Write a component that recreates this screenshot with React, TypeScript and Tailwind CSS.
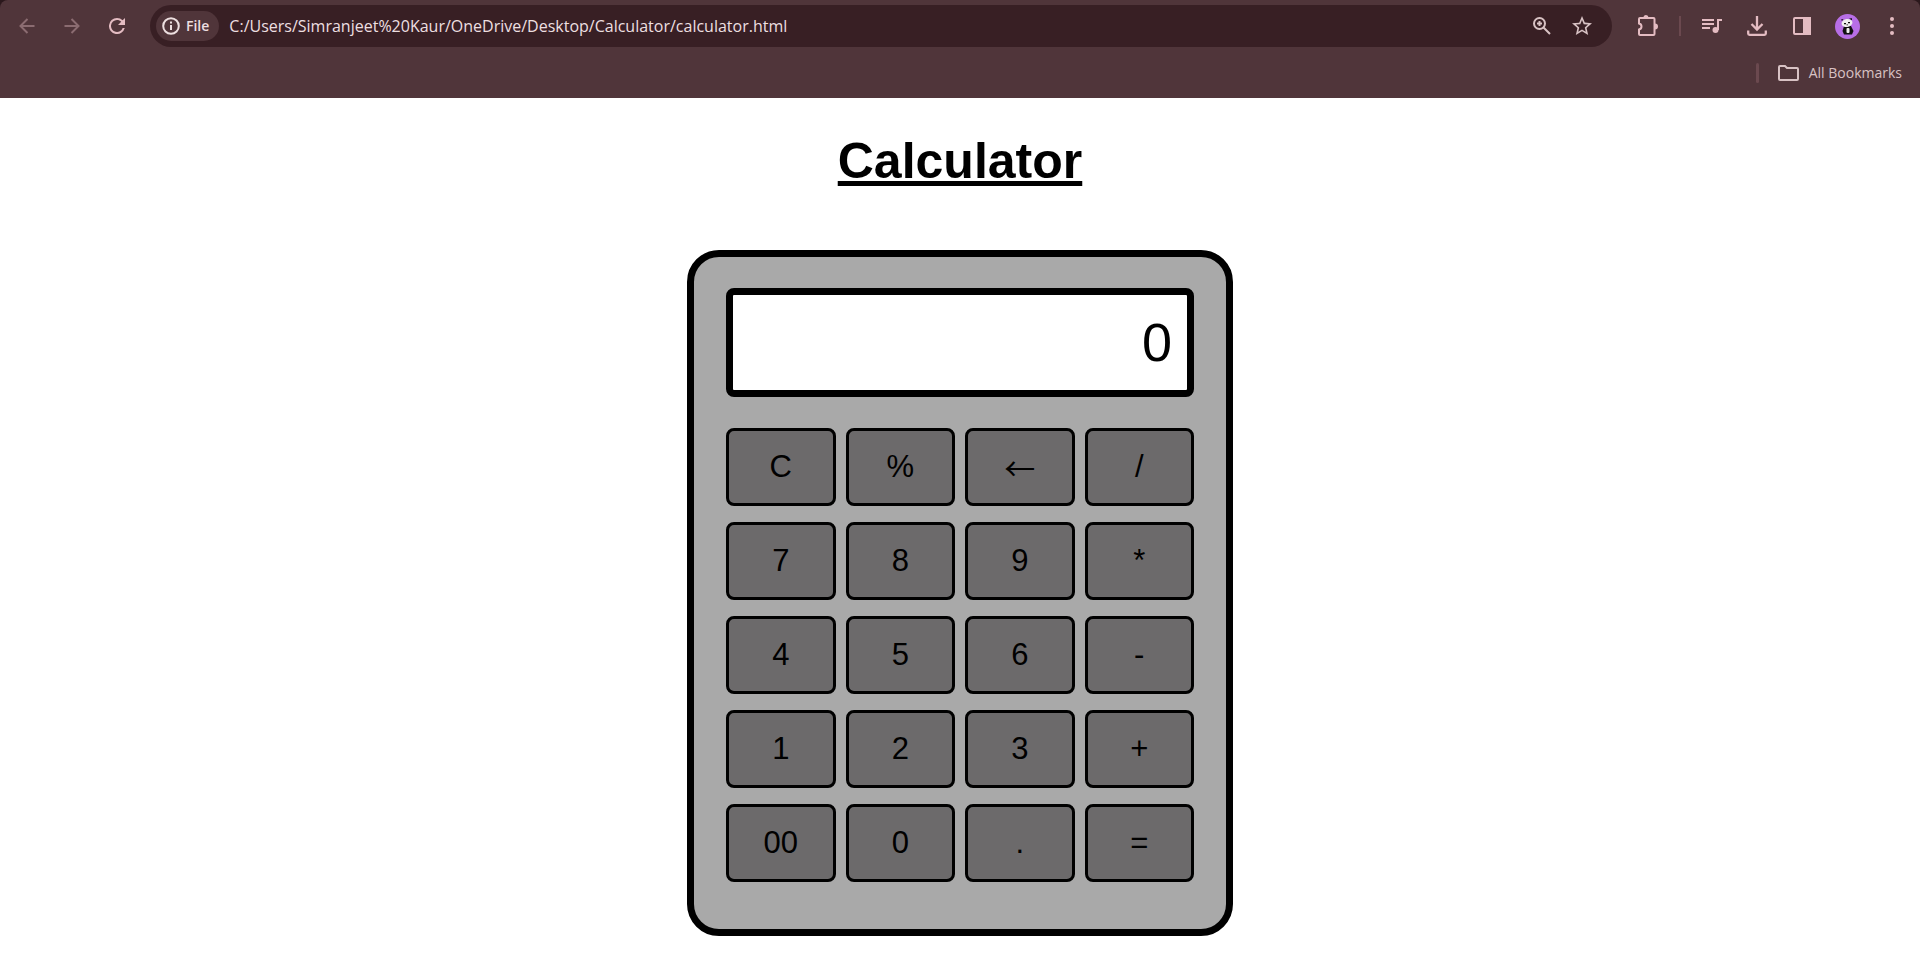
import type { ReactNode } from "react";

type IconProps = { w: number; h: number; children: ReactNode; viewBox?: string };

function Icon({ w, h, children, viewBox }: IconProps) {
  return (
    <svg width={w} height={h} viewBox={viewBox ?? `0 0 ${w} ${h}`} fill="none" stroke="currentColor" strokeWidth="2" aria-hidden="true">
      {children}
    </svg>
  );
}

function ToolButton({ label, children, className = "" }: { label: string; children: ReactNode; className?: string }) {
  return (
    <button type="button" aria-label={label} className={`flex size-8 shrink-0 items-center justify-center ${className}`}>
      {children}
    </button>
  );
}

function BrowserBar() {
  return (
    <div className="bg-[#2b181c]">
      <header className="flex h-[98px] flex-col rounded-t-lg bg-[#50353a] pt-[5px] font-['Open_Sans','Noto_Sans',sans-serif] text-[#e4bcc2]">
        <div className="flex h-[42px] items-center pr-3 pl-[11px]">
          <nav aria-label="Navigation" className="flex gap-[13px] pr-[17px]">
            <ToolButton label="Back" className="text-[#8b6c71]">
              <Icon w={16} h={16}><path d="M15.500 8H2M8.500 1L1.500 8l7 7" /></Icon>
            </ToolButton>
            <ToolButton label="Forward" className="text-[#8b6c71]">
              <Icon w={16} h={16}><path d="M.5 8H14M7.500 1l7 7-7 7" /></Icon>
            </ToolButton>
            <ToolButton label="Reload">
              <Icon w={16} h={16} viewBox="4 4 16 16">
                <path
                  fill="currentColor"
                  stroke="none"
                  d="M17.650 6.350A7.960 7.960 0 0 0 12 4a8 8 0 1 0 7.730 10h-2.080A6 6 0 1 1 12 6c1.660 0 3.140.690 4.220 1.780L13 11h7V4z"
                />
              </Icon>
            </ToolButton>
          </nav>
          <div className="flex h-full grow items-center rounded-full bg-[#381f24] pr-3.5 pl-1.5 text-[#eddfe0]">
            <button type="button" className="flex h-[30px] items-center gap-1.5 rounded-full bg-[#50353a] px-1.5 pr-2.5 text-sm font-semibold">
              <Icon w={18} h={18}><circle cx="9" cy="9" r="7.800" /><path d="M9 8v5M9 4.500v2" /></Icon>
              File
            </button>
            <input
              aria-label="Address"
              defaultValue="C:/Users/Simranjeet%20Kaur/OneDrive/Desktop/Calculator/calculator.html"
              className="ml-2.5 h-8 min-w-0 grow bg-transparent text-base text-[#eddfe0] outline-none"
            />
            <div className="flex gap-2 text-[#d8c2c4]">
              <ToolButton label="Zoom">
                <Icon w={18} h={18}><circle cx="6.500" cy="6.500" r="5.500" /><path d="M10.500 10.500l6.500 6.500M6.500 4v5M4 6.500h5" /></Icon>
              </ToolButton>
              <ToolButton label="Bookmark this tab">
                <Icon w={20} h={20} viewBox="2 2 20 20">
                  <path
                    fill="currentColor"
                    stroke="none"
                    d="M22 9.240l-7.190-.620L12 2 9.190 8.630 2 9.240l5.460 4.730L5.820 21 12 17.270 18.180 21l-1.630-7.030zM12 15.400l-3.760 2.270 1-4.280-3.320-2.880 4.380-.380L12 6.100l1.710 4.040 4.380.380-3.320 2.880 1 4.280z"
                  />
                </Icon>
              </ToolButton>
            </div>
          </div>
          <div className="flex items-center gap-[13px] pl-5">
            <ToolButton label="Extensions">
              <Icon w={22} h={22}>
                <path d="M3 3h13.500q1 0 1 1v15q0 1-1 1H3q-1 0-1-1v-4.500q2.500-.5 2.500-3T2 8.500V4q0-1 1-1z" />
                <path d="M6.500 2.500a2.500 2.500 0 0 1 5 0zM18 8.500a2.800 2.800 0 0 1 0 6z" fill="currentColor" stroke="none" />
              </Icon>
            </ToolButton>
            <span className="mx-0.5 h-5 w-0.5 bg-[#6b494f]" />
            <ToolButton label="Media controls">
              <Icon w={20} h={16}><path d="M0 2h12M0 6h12M0 10h8M16 12V2h4" /><circle cx="13.500" cy="12" r="3" fill="currentColor" stroke="none" /></Icon>
            </ToolButton>
            <ToolButton label="Downloads">
              <Icon w={20} h={20}><path strokeWidth="2.300" d="M10 0v13M4.500 8l5.500 5.500L15.500 8M1.200 14.500v3q0 1.300 1.300 1.300h15q1.300 0 1.300-1.300v-3" /></Icon>
            </ToolButton>
            <ToolButton label="Side panel">
              <Icon w={18} h={18}><rect x="1" y="1" width="16" height="16" rx="1" /><path d="M11 1h6v16h-6z" fill="currentColor" /></Icon>
            </ToolButton>
            <ToolButton label="Profile">
              <Icon w={25} h={25}>
                <g stroke="none">
                  <circle cx="12.500" cy="12.500" r="12.500" fill="#b76ee6" />
                  <path d="M9 12h7l2.500 5-1.500 3.500H9L7.500 17z" fill="#111" />
                  <rect x="11.500" y="14" width="3" height="5" rx="1" fill="#eee" />
                  <ellipse cx="12" cy="9" rx="5.500" ry="4" fill="#eee" transform="rotate(-10 12 9)" />
                  <path d="M6 5.500l2.500-.5-1.500 2zM14 4.500l3-.3v2zM9 9h2v1.200H9zM13 8h2v1.200h-2zM11.500 10.500h1.500v.8h-1.500z" fill="#111" />
                </g>
              </Icon>
            </ToolButton>
            <ToolButton label="Menu">
              <Icon w={4} h={18}><g fill="currentColor" stroke="none"><circle cx="2" cy="2" r="2" /><circle cx="2" cy="9" r="2" /><circle cx="2" cy="16" r="2" /></g></Icon>
            </ToolButton>
          </div>
        </div>
        <div className="flex grow items-center justify-end gap-[19px] pr-[18px]">
          <span className="h-5 w-[3px] rounded-full bg-[#6b494f]" />
          <button type="button" className="flex items-center gap-2.5 text-sm text-[#d8c2c4]">
            <Icon w={21} h={16}><path d="M2 1h5l2 2h10q1 0 1 1v10q0 1-1 1H2q-1 0-1-1V2q0-1 1-1z" /></Icon>
            All Bookmarks
          </button>
        </div>
      </header>
    </div>
  );
}

const KEYS = ["C", "%", "←", "/", "7", "8", "9", "*", "4", "5", "6", "-", "1", "2", "3", "+", "00", "0", ".", "="];

export default function App() {
  return (
    <div className="min-h-screen bg-white font-['Liberation_Sans',Arial,sans-serif] text-black">
      <BrowserBar />
      <main className="flex flex-col items-center pt-[34px]">
        <h1 className="text-[50px] leading-[58px] font-bold underline">Calculator</h1>
        <section aria-label="Calculator" className="mt-[60px] w-full max-w-[546px] rounded-[32px] border-7 border-black bg-[#a9a9a9] px-8 pt-[31px] pb-[47px]">
          <input
            aria-label="Result"
            defaultValue="0"
            className="block h-[109px] w-full rounded-lg border-7 border-black bg-white px-[15px] pb-0.5 text-right text-[54px] outline-none"
          />
          <div className="mt-[31px] grid grid-cols-4 gap-x-2.5 gap-y-4">
            {KEYS.map((key) => (
              <button
                key={key}
                type="button"
                className={`h-[78px] rounded-lg border-3 border-black bg-[#6c6a6b] text-[31px] leading-9 ${key === "←" ? "font-['Noto_Sans_CJK_SC',sans-serif]" : ""}`}
              >
                {key}
              </button>
            ))}
          </div>
        </section>
      </main>
    </div>
  );
}
